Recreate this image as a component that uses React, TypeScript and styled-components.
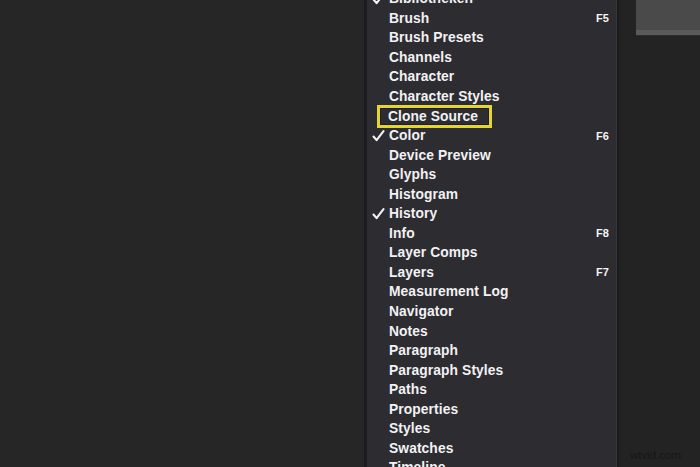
import styled, { createGlobalStyle } from "styled-components";

const GlobalStyle = createGlobalStyle`
  html, body {
    margin: 0;
    padding: 0;
    background: #262626;
  }
`;

const Screen = styled.div`
  display: flex;
  width: 700px;
  height: 467px;
  overflow: hidden;
  background: #262626;
  font-family: "Liberation Sans", Arial, sans-serif;
`;

const Canvas = styled.div`
  width: 364px;
  flex-shrink: 0;
  background: #262626;
`;

const Menu = styled.div`
  width: 250px;
  flex-shrink: 0;
  background: #2d2c31;
  border-left: 3px solid #1c1c1e;
  border-right: 2px solid #1a1a1c;
  box-shadow: inset -1px 0 0 #37363b;
`;

const List = styled.ul`
  list-style: none;
  margin: -11px 0 0;
  padding: 0;
  display: flex;
  flex-direction: column;
`;

const Row = styled.li`
  height: 19.55px;
  display: flex;
  align-items: center;
  padding: 0 6px 0 5px;
  color: #f2f2f4;
  font-size: 13.8px;
  font-weight: 700;
  letter-spacing: 0.1px;
`;

const Check = styled.span`
  width: 17px;
  flex-shrink: 0;
  display: flex;
  align-items: center;
`;

const Label = styled.span<{ $boxed?: boolean }>`
  flex: 1;
  display: flex;
  white-space: nowrap;
  span {
    display: inline-block;
    padding: ${(p) => (p.$boxed ? "1px 11px 1px 8px" : "0")};
    margin-left: ${(p) => (p.$boxed ? "-12px" : "0")};
    border: ${(p) => (p.$boxed ? "3px solid #e3d630" : "none")};
    box-shadow: ${(p) => (p.$boxed ? "inset 0 0 0 1px #1e1d19" : "none")};
    line-height: 15px;
  }
`;

const Shortcut = styled.span`
  font-size: 11px;
  font-weight: 700;
  color: #f4f4f6;
  margin-right: 2px;
`;

const Side = styled.div`
  flex: 1;
  min-width: 0;
  background: #232323;
  display: flex;
  flex-direction: column;
  justify-content: space-between;
`;

const Toolbar = styled.div`
  height: 30px;
  margin-left: 17px;
  background: #4a4a4a;
  border-bottom: 5px solid #5a5a5a;
  box-shadow: 0 1px 0 #2c2c2c;
`;

const Watermark = styled.div`
  font-size: 11.5px;
  color: #161616;
  padding: 0 0 6px 11px;
  white-space: nowrap;
`;

const items: { name: string; key?: string; checked?: boolean; boxed?: boolean }[] = [
  { name: "Bibliotheken", checked: true },
  { name: "Brush", key: "F5" },
  { name: "Brush Presets" },
  { name: "Channels" },
  { name: "Character" },
  { name: "Character Styles" },
  { name: "Clone Source", boxed: true },
  { name: "Color", key: "F6", checked: true },
  { name: "Device Preview" },
  { name: "Glyphs" },
  { name: "Histogram" },
  { name: "History", checked: true },
  { name: "Info", key: "F8" },
  { name: "Layer Comps" },
  { name: "Layers", key: "F7" },
  { name: "Measurement Log" },
  { name: "Navigator" },
  { name: "Notes" },
  { name: "Paragraph" },
  { name: "Paragraph Styles" },
  { name: "Paths" },
  { name: "Properties" },
  { name: "Styles" },
  { name: "Swatches" },
  { name: "Timeline" },
];

function CheckMark() {
  return (
    <svg width="13" height="12" viewBox="0 0 13 12">
      <path
        d="M1.5 6.5 L4.6 10.2 L11.5 1.2"
        fill="none"
        stroke="#f2f2f4"
        strokeWidth="2.1"
        strokeLinecap="round"
        strokeLinejoin="round"
      />
    </svg>
  );
}

export default function App() {
  return (
    <>
      <GlobalStyle />
      <Screen>
        <Canvas />
        <Menu>
          <List>
            {items.map((it) => (
              <Row key={it.name}>
                <Check>{it.checked && <CheckMark />}</Check>
                <Label $boxed={it.boxed}>
                  <span>{it.name}</span>
                </Label>
                {it.key && <Shortcut>{it.key}</Shortcut>}
              </Row>
            ))}
          </List>
        </Menu>
        <Side>
          <Toolbar />
          <Watermark>wtvid.com</Watermark>
        </Side>
      </Screen>
    </>
  );
}
